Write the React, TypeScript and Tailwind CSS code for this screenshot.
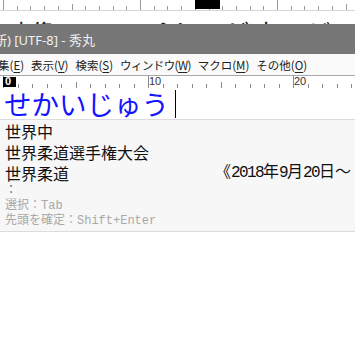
import React from "react";

const CJK = '"Noto Sans CJK JP", sans-serif';
const MONO = '"Liberation Mono", "Noto Sans CJK JP", monospace';

function TopRuler() {
  const ticks = Array.from({ length: 27 }, (_, i) => i);
  return (
    <div className="h-[11px] border-b border-[#d6d6d6] bg-white shrink-0">
      <svg width="355" height="10" className="block">
        {ticks.map((i) => {
          const x = Math.round(3 + 13.7 * i) + 0.5;
          const y1 = i % 10 === 0 ? 0 : i % 5 === 0 ? 4 : 6;
          return <line key={i} x1={x} y1={y1} x2={x} y2={10} stroke="#9a9a9a" strokeWidth="1" />;
        })}
        <rect x="195" y="0" width="25" height="9" fill="#000" />
      </svg>
    </div>
  );
}

function BottomRuler() {
  const ticks = Array.from({ length: 25 }, (_, i) => i);
  return (
    <div className="relative h-[13px] border-t border-[#a8a8a8] bg-white shrink-0">
      <svg width="355" height="12" className="block">
        {ticks.map((i) => {
          const x = Math.round(3 + 14.5 * i) + 0.5;
          const y1 = i % 10 === 0 ? 0 : i % 5 === 0 ? 6 : 8;
          return <line key={i} x1={x} y1={y1} x2={x} y2={12} stroke="#8a8a8a" strokeWidth="1" />;
        })}
        <rect x="3" y="1" width="13" height="10" fill="#000" />
      </svg>
      <span
        className="absolute left-[5px] top-[0px] text-[11px] leading-[11px] font-bold text-white"
        style={{ fontFamily: '"Liberation Sans", sans-serif' }}
      >
        0
      </span>
      <span
        className="absolute left-[149px] top-[0px] text-[11px] leading-[11px] text-[#333]"
        style={{ fontFamily: '"Liberation Sans", sans-serif' }}
      >
        10
      </span>
      <span
        className="absolute left-[294px] top-[0px] text-[11px] leading-[11px] text-[#333]"
        style={{ fontFamily: '"Liberation Sans", sans-serif' }}
      >
        20
      </span>
    </div>
  );
}

function MenuItem({ label, k }: { label: string; k: string }) {
  return (
    <span className="whitespace-nowrap">
      {label}(<span className="underline underline-offset-2">{k}</span>)
    </span>
  );
}

export default function App() {
  return (
    <div className="w-[355px] h-[353px] bg-white overflow-hidden flex flex-col" style={{ fontFamily: CJK }}>
      <TopRuler />
      <div className="h-[13px] overflow-hidden bg-white shrink-0">
        <div className="pl-[3px] pt-[9px] text-[27.4px] leading-none whitespace-nowrap text-[#222]">
          映像のインパクトが凄いゲーム
        </div>
      </div>
      <div className="h-[30px] bg-[#777777] flex items-center pt-[3px] shrink-0 overflow-hidden">
        <span
          className="-ml-[6px] whitespace-nowrap text-[13px] text-[#f2f2f2]"
          style={{ fontFamily: '"Noto Sans", "Noto Sans CJK JP", sans-serif' }}
        >
          新) [UTF-8] - 秀丸
        </span>
      </div>
      <div className="h-[21px] bg-[#fafafa] flex items-center gap-[7px] pt-[2px] text-[11.5px] text-[#222] whitespace-nowrap overflow-hidden shrink-0">
        <span className="-ml-[2px]">
          <MenuItem label="集" k="E" />
        </span>
        <MenuItem label="表示" k="V" />
        <MenuItem label="検索" k="S" />
        <span className="tracking-[-0.6px]">
          <MenuItem label="ウィンドウ" k="W" />
        </span>
        <MenuItem label="マクロ" k="M" />
        <MenuItem label="その他" k="O" />
      </div>
      <BottomRuler />
      <div className="h-[31px] flex items-center pl-[4px] bg-white shrink-0">
        <span className="text-[27.5px] leading-[31px] text-[#1414ff] whitespace-nowrap">せかいじゅう</span>
        <span className="ml-[6px] w-px h-[28px] bg-black" />
      </div>
      <div className="border-t border-b border-[#dcdcdc] bg-[#f7f7f7] pt-px pb-[2px] shrink-0">
        <div className="h-[21px] leading-[21px] pl-[5px] text-[16px] text-[#111]">世界中</div>
        <div className="h-[21px] leading-[21px] pl-[5px] text-[16px] text-[#111]">世界柔道選手権大会</div>
        <div className="h-[21px] leading-[21px] pl-[5px] text-[16px] text-[#111] flex whitespace-nowrap">
          <span>世界柔道</span>
          <span className="ml-[146px]" style={{ fontFamily: MONO }}>
            《<span className="tracking-[-1.6px]">2018</span>年<span className="tracking-[-1.6px]">9</span>月<span className="tracking-[-1.6px]">20</span>日～
          </span>
        </div>
        <div className="h-[15px] leading-[15px] pl-[5px] text-[12px] text-[#666]" style={{ fontFamily: MONO }}>
          ：
        </div>
        <div className="h-[15px] leading-[15px] pl-[5px] text-[12px] text-[#a8a8a8]" style={{ fontFamily: MONO }}>
          選択：Tab
        </div>
        <div className="h-[15px] leading-[15px] pl-[5px] text-[12px] text-[#a8a8a8]" style={{ fontFamily: MONO }}>
          先頭を確定：Shift+Enter
        </div>
      </div>
      <div className="flex-1 bg-white" />
    </div>
  );
}
